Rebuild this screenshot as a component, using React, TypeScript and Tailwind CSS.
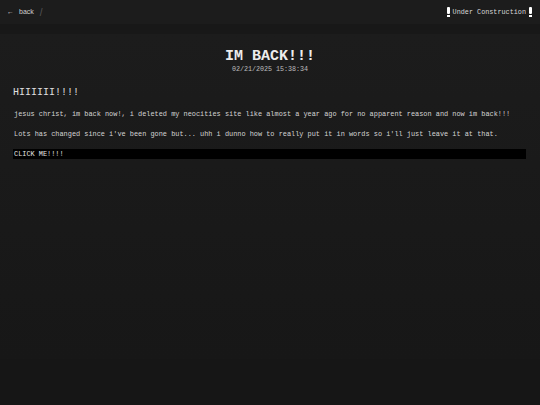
const MONO = "font-['Liberation_Mono','DejaVu_Sans_Mono',monospace]";

function Bang() {
  return (
    <span className="flex flex-col items-center gap-[1px]">
      <span className="w-[3px] h-[7px] bg-white rounded-[1px]" />
      <span className="w-[3px] h-[2px] bg-white" />
    </span>
  );
}

export default function App() {
  return (
    <div className={`min-h-[405px] w-full bg-[#161616] text-[#d4d4d4] antialiased ${MONO}`}>
      <header className="h-6 bg-[#1c1c1c] flex items-center justify-between pl-[7px] pr-[8px]">
        <div className="flex items-center gap-[5px] font-['Liberation_Sans',Arial,sans-serif] text-[7px] text-[#cfcfcf]">
          <span>←</span>
          <span>back</span>
          <span className="text-[#555] text-[10px] ml-[1px]">/</span>
        </div>
        <div className="flex items-center gap-[3px] text-[6.8px] text-[#d8d8d8]">
          <Bang />
          <span>Under Construction</span>
          <Bang />
        </div>
      </header>
      <div className="h-[10px] bg-[#181818]" />
      <main className="bg-gradient-to-b from-[#1c1c1c] to-[#171717] px-[13px] pt-[14px] pb-[200px]">
        <div className="flex flex-col items-center">
          <h1 className="text-[15px] font-bold leading-[17px] text-[#ececec]">IM BACK!!!</h1>
          <div className="text-[6.7px] leading-[8px] text-[#bdbdbd]">02/21/2025 15:38:34</div>
        </div>
        <h2 className="mt-[13px] text-[10px] leading-[13px] text-[#e0e0e0]">HIIIIII!!!!</h2>
        <p className="mt-[11px] text-[6.9px] leading-[9px] pl-[1px]">
          jesus christ, im back now!, i deleted my neocities site like almost a year ago for no apparent reason and now im back!!!
        </p>
        <p className="mt-[11px] text-[6.9px] leading-[9px] pl-[1px]">
          Lots has changed since i've been gone but... uhh i dunno how to really put it in words so i'll just leave it at that.
        </p>
        <div className="mt-[10px] bg-black h-[10px] flex items-center px-[1px] text-[6.9px] text-[#e4e4e4] w-[513px]">
          CLICK ME!!!!
        </div>
      </main>
    </div>
  );
}
